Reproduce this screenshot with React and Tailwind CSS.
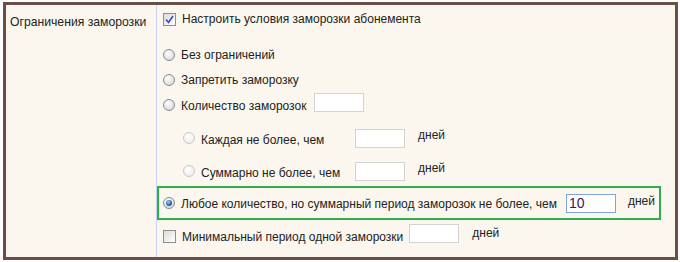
import React from "react";

const font = { fontFamily: '"Liberation Sans", Arial, sans-serif' };

const Radio = ({ checked = false, disabled = false }) => (
  <span
    className={`inline-flex items-center justify-center w-[12px] h-[12px] rounded-full border shrink-0 ${
      disabled
        ? "border-[#c8c8c8] bg-[radial-gradient(circle_at_40%_35%,#ffffff,#e8e8e8)]"
        : "border-[#8c8c8c] bg-[radial-gradient(circle_at_40%_35%,#ffffff,#cfcfcf)]"
    }`}
  >
    {checked && (
      <span className="w-[6px] h-[6px] rounded-full bg-[radial-gradient(circle_at_40%_35%,#9fd0ff,#1d5fae_60%,#0b2f63)]" />
    )}
  </span>
);

const Checkbox = ({ checked = false }) => (
  <span className="inline-flex items-center justify-center w-[13px] h-[13px] border border-[#8f8f8f] bg-[linear-gradient(135deg,#dcdcdc,#ffffff)] shrink-0">
    {checked && (
      <svg width="9" height="9" viewBox="0 0 9 9">
        <path d="M1 4.5 L3.5 7.5 L8 1" fill="none" stroke="#2f4fc0" strokeWidth="1.6" />
      </svg>
    )}
  </span>
);

const Field = ({ value = "", active = false }) => (
  <span
    className={`inline-flex items-center shrink-0 w-[50px] h-[19px] bg-white border px-[2px] text-[14px] ${
      active ? "border-[#7fa5dc] text-[#40105e]" : "border-[#d3d3d3]"
    }`}
  >
    {value}
  </span>
);

export default function App() {
  return (
    <div className="w-[680px] h-[262px] bg-white pt-[2px] pl-[3px] text-[12px] text-[#222] whitespace-nowrap" style={font}>
      <div className="w-[675px] h-[258px] border-[3px] border-[#6b4f47] bg-[#fbf7ef] flex">
        <div className="w-[151px] shrink-0 border-r border-[#c6d6f2] pl-[4px] pt-[9px] leading-[16px] text-[12.2px]">
          Ограничения заморозки
        </div>
        <div className="flex-1 flex flex-col">
          <div className="flex items-center h-[20px] mt-[4px] pl-[6px] gap-[6px]">
            <Checkbox checked />
            <span>Настроить условия заморозки абонемента</span>
          </div>

          <div className="flex items-center h-[20px] mt-[16px] pl-[6px] gap-[6px]">
            <Radio />
            <span>Без ограничений</span>
          </div>

          <div className="flex items-center h-[20px] mt-[5px] pl-[6px] gap-[6px]">
            <Radio />
            <span>Запретить заморозку</span>
          </div>

          <div className="flex items-center h-[20px] mt-[5px] pl-[6px] gap-[6px]">
            <Radio />
            <span className="mt-[2px]">Количество заморозок</span>
            <span className="ml-[2px]">
              <Field />
            </span>
          </div>

          <div className="flex items-center h-[20px] mt-[13px] pl-[26px]">
            <Radio disabled />
            <span className="ml-[6px] w-[154px] mt-[4px]">Каждая не более, чем</span>
            <Field />
            <span className="ml-[13px] -mt-[6px]">дней</span>
          </div>

          <div className="flex items-center h-[20px] mt-[13px] pl-[26px]">
            <Radio disabled />
            <span className="ml-[6px] w-[154px] mt-[4px]">Суммарно не более, чем</span>
            <Field />
            <span className="ml-[13px] -mt-[6px]">дней</span>
          </div>

          <div className="flex items-center h-[34px] mt-[5px] w-[504px] border-2 border-[#2ead4b] pl-[4px]">
            <Radio checked />
            <span className="ml-[6px] mt-[2px]">Любое количество, но суммарный период заморозок не более, чем</span>
            <span className="ml-[9px]">
              <Field value="10" active />
            </span>
            <span className="ml-[12px] -mt-[5px]">дней</span>
          </div>

          <div className="flex items-center h-[20px] mt-[6px] pl-[6px]">
            <Checkbox />
            <span className="ml-[6px] mt-[2px]">Минимальный период одной заморозки</span>
            <span className="ml-[6px]">
              <Field />
            </span>
            <span className="ml-[13px] -mt-[7px]">дней</span>
          </div>
        </div>
      </div>
    </div>
  );
}
